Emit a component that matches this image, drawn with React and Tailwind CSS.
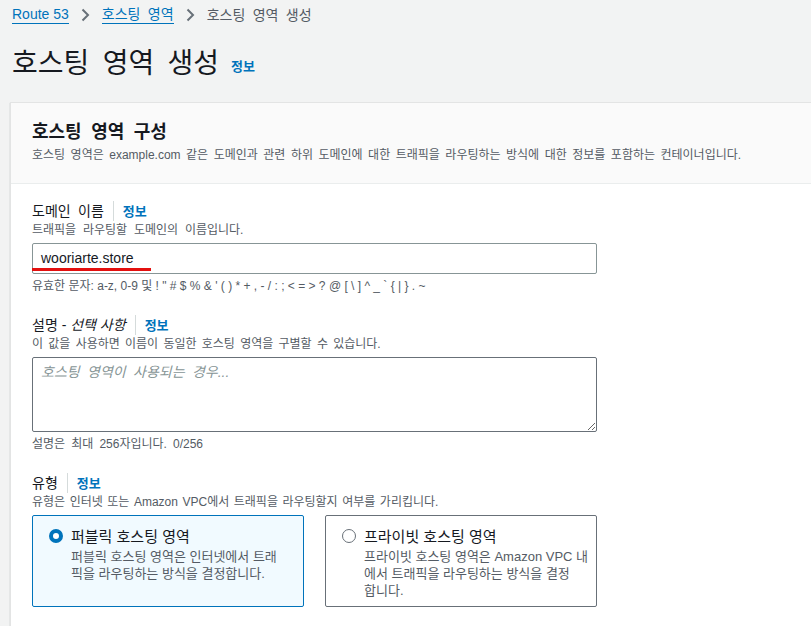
import React from "react";

const FONT = { fontFamily: '"Liberation Sans", "Noto Sans CJK KR", sans-serif' };

function Info() {
  return <span className="text-[13px] font-bold text-[#0073bb] [word-spacing:normal]">정보</span>;
}

function Label({ children, spacing }) {
  return (
    <div className="flex items-center h-[20px]">
      <span className={"text-[14px] text-[#16191f] pr-[9px] border-r border-[#d5dbdb] leading-[20px] " + spacing}>
        {children}
      </span>
      <span className="pl-[9px]"><Info /></span>
    </div>
  );
}

function Chevron() {
  return (
    <svg className="mx-[12px]" width="9" height="14" viewBox="0 0 9 14">
      <path d="M1.5 1.5l5.5 5.5-5.5 5.5" fill="none" stroke="#687078" strokeWidth="2" />
    </svg>
  );
}

function Tile({ selected, title, lines }) {
  return (
    <div
      className={
        "w-[272px] h-[92px] rounded-[2px] border px-[16px] pt-[12px] [word-spacing:normal] " +
        (selected ? "bg-[#f1faff] border-[#0073bb]" : "bg-white border-[#687078]")
      }
    >
      <div className="flex items-start gap-[8px]">
        <div className="pt-[1px]">
          {selected ? (
            <div className="w-[14px] h-[14px] rounded-full border-[4px] border-[#0073bb] bg-white" />
          ) : (
            <div className="w-[14px] h-[14px] rounded-full border-[1.5px] border-[#687078] bg-white" />
          )}
        </div>
        <div>
          <div className="text-[15px] leading-[18px] text-[#16191f]">{title}</div>
          <div className="mt-[2px] text-[13px] leading-[17px] text-[#545b64] whitespace-nowrap">
            {lines.map((l) => (
              <div key={l}>{l}</div>
            ))}
          </div>
        </div>
      </div>
    </div>
  );
}

export default function App() {
  return (
    <div className="w-[811px] h-[626px] overflow-hidden bg-[#f2f3f3] [word-spacing:0.2em]" style={FONT}>
      <nav className="flex items-center h-[28px] pl-[12px] pt-[1px] text-[14px] [word-spacing:0.25em]">
        <a className="text-[#0073bb] border-b border-[#0073bb] leading-[18px] [word-spacing:normal]">Route 53</a>
        <Chevron />
        <a className="text-[#0073bb] border-b border-[#0073bb] leading-[18px]">호스팅 영역</a>
        <Chevron />
        <span className="text-[#545b64] leading-[18px]">호스팅 영역 생성</span>
      </nav>

      <div className="flex items-end pl-[12px] mt-[14px] h-[40px]">
        <h1 className="text-[28px] leading-[36px] text-[#16191f] [word-spacing:0.2em]">호스팅 영역 생성</h1>
        <span className="ml-[12px] mb-[4px]"><Info /></span>
      </div>

      <section className="ml-[10px] mt-[20px] w-[830px] bg-white border-l border-t border-[#e3e4e4] shadow-[0_1px_1px_rgba(0,28,36,0.3)]">
        <header className="bg-[#fafafa] border-b border-[#eaeded] px-[21px] pt-[17px] pb-[19px]">
          <h2 className="text-[18px] leading-[24px] font-bold text-[#16191f] [word-spacing:0.25em]">호스팅 영역 구성</h2>
          <p className="mt-[2px] text-[12px] leading-[18px] text-[#545b64] [word-spacing:0.18em]">
            호스팅 영역은 example.com 같은 도메인과 관련 하위 도메인에 대한 트래픽을 라우팅하는 방식에 대한 정보를 포함하는 컨테이너입니다.
          </p>
        </header>

        <div className="px-[21px] pt-[17px] pb-[20px]">
          <Label spacing="[word-spacing:0.25em]">도메인 이름</Label>
          <p className="text-[12px] leading-[18px] text-[#545b64] [word-spacing:0.29em]">트래픽을 라우팅할 도메인의 이름입니다.</p>
          <div className="relative mt-[4px] w-[565px] h-[31px] border border-[#879596] rounded-[2px] bg-white flex items-center pl-[8px]">
            <span className="text-[14px] text-[#16191f] [word-spacing:normal]">wooriarte.store</span>
            <div className="absolute left-[-1px] top-[24px] w-[119px] h-[3px] bg-[#e3100f]" />
          </div>
          <p className="mt-[3px] text-[12px] leading-[18px] text-[#545b64] [word-spacing:normal]">
            유효한 문자: a-z, 0-9 및 ! " # $ % &amp; ' ( ) * + , - / : ; &lt; = &gt; ? @ [ \ ] ^ _ ` {"{"} | {"}"} . ~
          </p>

          <div className="mt-[20px]">
            <Label spacing="[word-spacing:normal]">
              설명 - <i>선택 사항</i>
            </Label>
          </div>
          <p className="text-[12px] leading-[18px] text-[#545b64] [word-spacing:0.16em]">이 값을 사용하면 이름이 동일한 호스팅 영역을 구별할 수 있습니다.</p>
          <textarea
            className="mt-[4px] block w-[565px] h-[75px] border border-[#687078] rounded-[2px] bg-white px-[8px] py-[4px] text-[14px] italic placeholder:text-[#879596] outline-none [word-spacing:0.25em]"
            placeholder="호스팅 영역이 사용되는 경우..."
          />
          <p className="mt-[3px] text-[12px] leading-[18px] text-[#545b64] [word-spacing:0.23em]">설명은 최대 256자입니다. 0/256</p>

          <div className="mt-[20px]">
            <Label spacing="[word-spacing:normal]">유형</Label>
          </div>
          <p className="text-[12px] leading-[18px] text-[#545b64] [word-spacing:0.1em]">유형은 인터넷 또는 Amazon VPC에서 트래픽을 라우팅할지 여부를 가리킵니다.</p>
          <div className="mt-[4px] flex gap-[21px]">
            <Tile
              selected
              title="퍼블릭 호스팅 영역"
              lines={["퍼블릭 호스팅 영역은 인터넷에서 트래", "픽을 라우팅하는 방식을 결정합니다."]}
            />
            <Tile
              title="프라이빗 호스팅 영역"
              lines={["프라이빗 호스팅 영역은 Amazon VPC 내", "에서 트래픽을 라우팅하는 방식을 결정", "합니다."]}
            />
          </div>
        </div>
      </section>
    </div>
  );
}
